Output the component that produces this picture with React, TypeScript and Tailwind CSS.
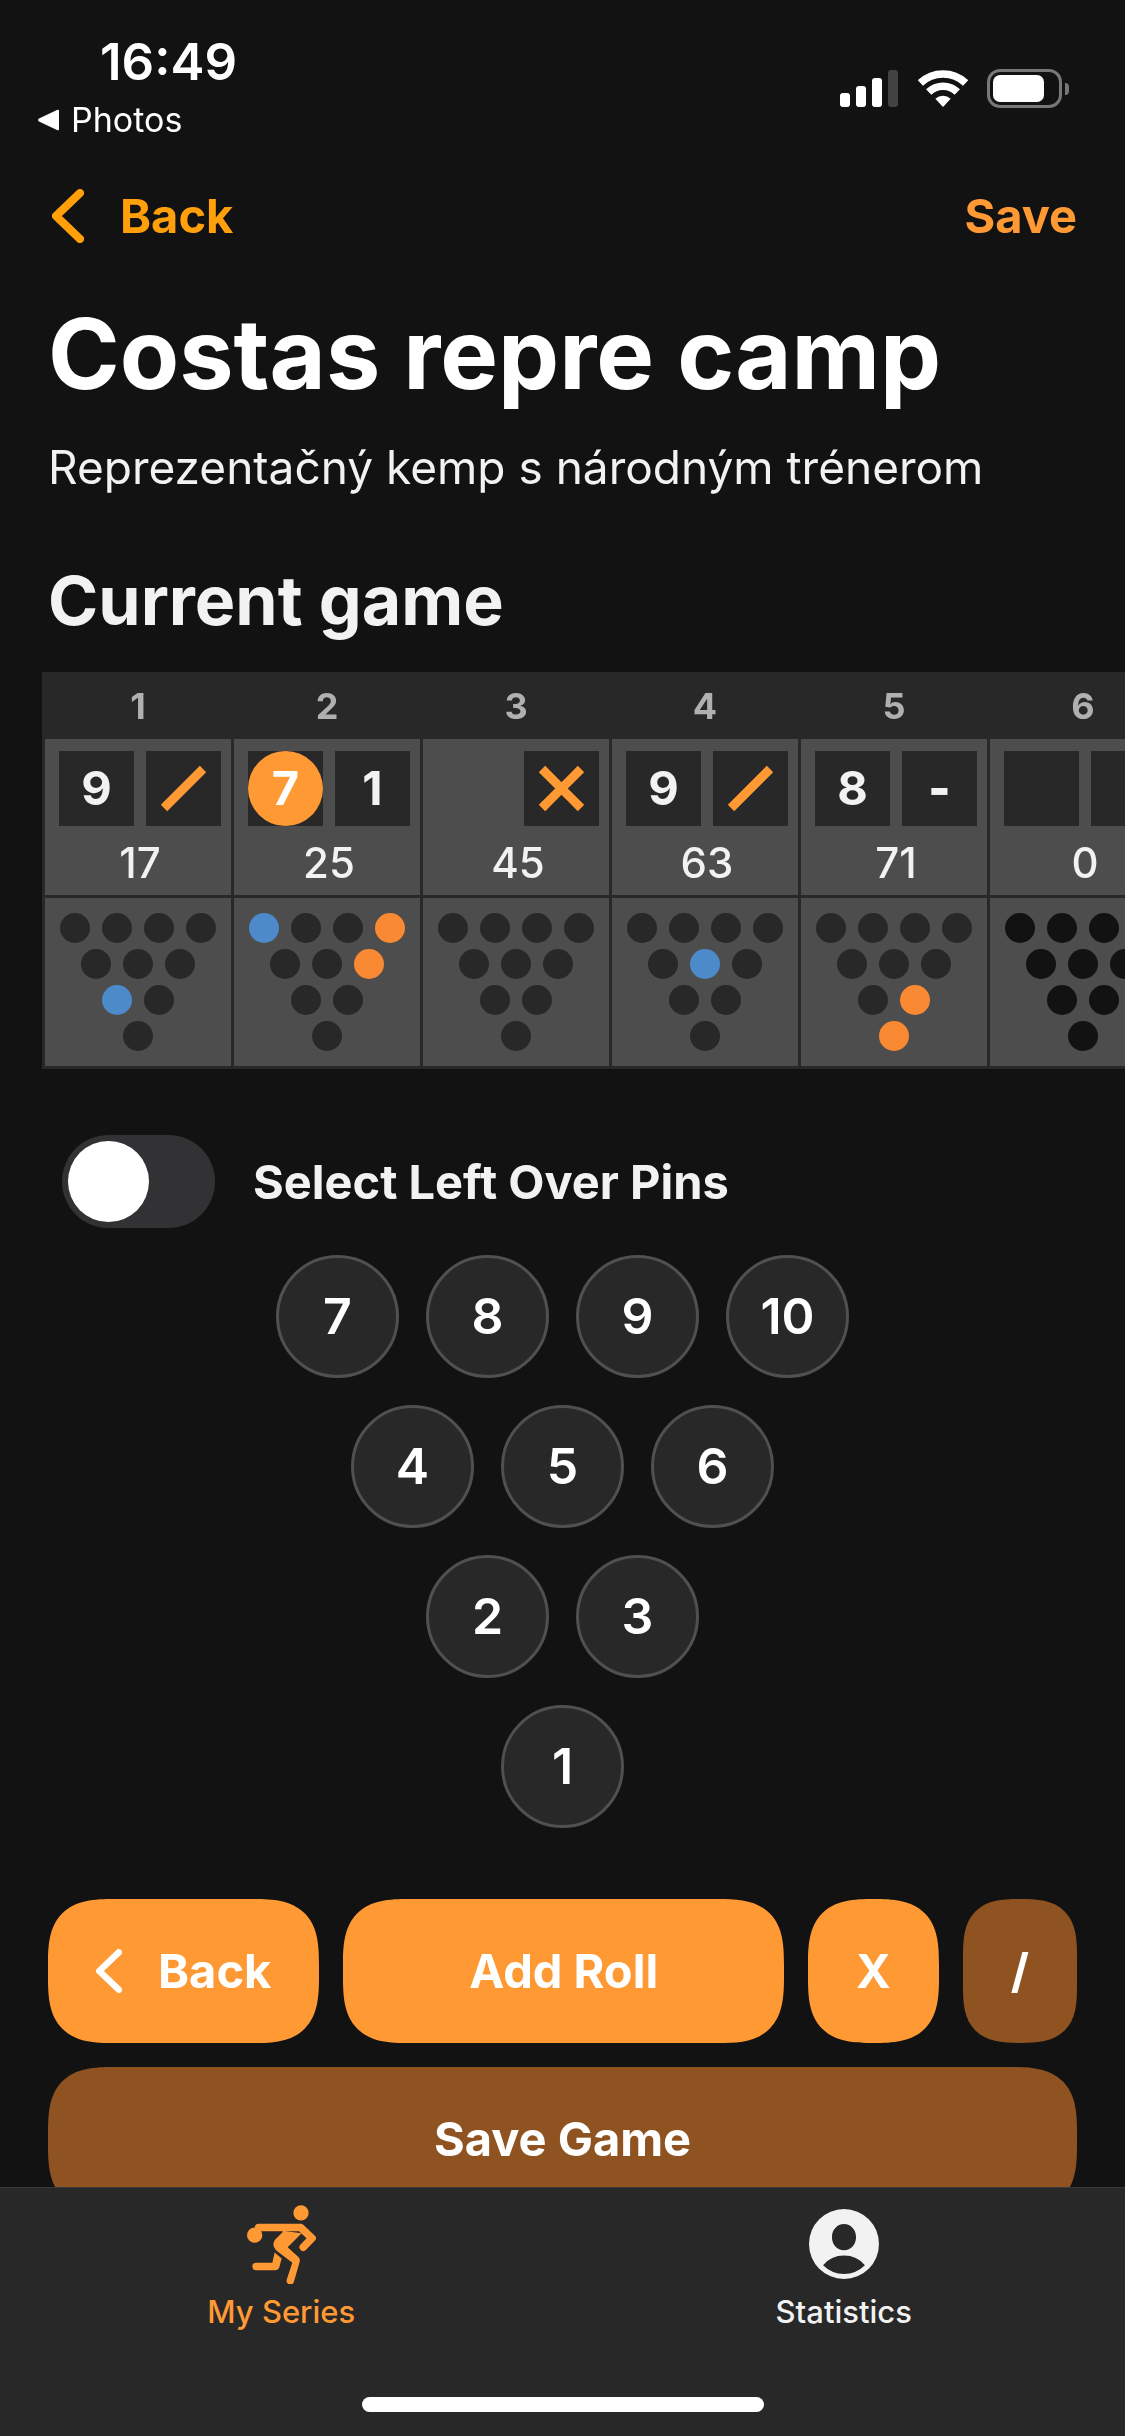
import { useState } from "react";

type Mark = string | null;

interface Frame {
  number: number;
  rolls: [Mark, Mark];
  selected?: number;
  score: number;
  blue: number[];
  orange: number[];
  played: boolean;
}

const PIN_ROWS = [[7, 8, 9, 10], [4, 5, 6], [2, 3], [1]];

const FRAMES: Frame[] = [
  { number: 1, rolls: ["9", "/"], score: 17, blue: [2], orange: [], played: true },
  { number: 2, rolls: ["7", "1"], selected: 0, score: 25, blue: [7], orange: [10, 6], played: true },
  { number: 3, rolls: [null, "X"], score: 45, blue: [], orange: [], played: true },
  { number: 4, rolls: ["9", "/"], score: 63, blue: [5], orange: [], played: true },
  { number: 5, rolls: ["8", "-"], score: 71, blue: [], orange: [3, 1], played: true },
  { number: 6, rolls: ["", ""], score: 0, blue: [], orange: [], played: false },
];

function Chevron({ className }: { className: string }) {
  return (
    <svg viewBox="0 0 32 54" className={className} fill="none" stroke="currentColor" strokeWidth="8" strokeLinecap="round" strokeLinejoin="round" aria-hidden="true">
      <path d="M28 4L4 27l24 23" />
    </svg>
  );
}

function StatusBar() {
  return (
    <div className="flex items-start justify-between pt-8 pr-[56px] pl-[37px] text-white">
      <div>
        <div className="pl-[63px] text-[51px] leading-[60px] font-semibold">16:49</div>
        <a href="#photos" className="mt-2 flex items-center gap-3 text-[34px] leading-[40px]">
          <svg viewBox="0 0 22 22" className="size-[22px]" fill="currentColor" aria-hidden="true">
            <path d="M20 1Q22 0 22 2V20Q22 22 20 21L2 12.500Q0 11 2 9.500Z" />
          </svg>
          Photos
        </a>
      </div>
      <div className="flex items-center pt-[37px]">
        <div className="flex items-end gap-[6px]">
          <span className="h-[14px] w-[10px] rounded-[3px] bg-white" />
          <span className="h-[21px] w-[10px] rounded-[3px] bg-white" />
          <span className="h-[29px] w-[10px] rounded-[3px] bg-white" />
          <span className="h-[37px] w-[10px] rounded-[3px] bg-[#424242]" />
        </div>
        <svg viewBox="0 0 150 111" className="ml-5 h-[37px] w-[50px]" fill="none" stroke="currentColor" strokeWidth="23" aria-hidden="true">
          <path d="M7 39A99 99 0 0 1 143 39" />
          <path d="M32 66A62 62 0 0 1 118 66" />
          <path d="M75 111L52 86A35 35 0 0 1 98 86Z" fill="currentColor" stroke="none" />
        </svg>
        <div className="ml-[19px] h-[39px] w-[75px] rounded-[13px] border-3 border-[#777] p-[3px]">
          <div className="h-full w-[51px] rounded-[7px] bg-white" />
        </div>
        <span className="ml-[3px] h-3 w-1 rounded-r-full bg-[#777]" />
      </div>
    </div>
  );
}

function RollMark({ mark }: { mark: string }) {
  if (mark === "-") return <span className="font-black">-</span>;
  if (mark !== "/" && mark !== "X") return <>{mark}</>;
  return (
    <svg viewBox="0 0 75 75" className="size-full" stroke="#ff9933" strokeWidth="9" role="img" aria-label={mark === "X" ? "Strike" : "Spare"}>
      <path d="M18 57L57 18" />
      {mark === "X" && <path d="M18 18L57 57" />}
    </svg>
  );
}

function RollBox({ mark, selected }: { mark: Mark; selected: boolean }) {
  if (mark === null) return <span className="size-[75px]" />;
  return (
    <span className="size-[75px] bg-[#282828] text-[47px] font-bold">
      <span className={selected ? "flex size-full items-center justify-center rounded-full bg-[#ff9933] text-white" : "flex size-full items-center justify-center"}>
        <RollMark mark={mark} />
      </span>
    </span>
  );
}

function pinColor(frame: Frame, pin: number) {
  if (frame.blue.includes(pin)) return "bg-[#4c8aca]";
  if (frame.orange.includes(pin)) return "bg-[#f98932]";
  return frame.played ? "bg-[#282828]" : "bg-[#121212]";
}

function ScoreSheet() {
  return (
    <div className="mt-[30px] ml-[42px] overflow-x-auto [scrollbar-width:none]">
      <table className="w-max table-fixed border-separate border-spacing-[3px] bg-[#282828] text-[#f2f2f2]">
        <thead>
          <tr>
            {FRAMES.map((f) => (
              <th key={f.number} scope="col" className="h-[61px] w-[186px] p-0 text-[36px] leading-[48px] font-bold text-[#b0b0b0]">
                {f.number}
              </th>
            ))}
          </tr>
        </thead>
        <tbody>
          <tr>
            {FRAMES.map((f) => (
              <td key={f.number} className="h-[156px] bg-[#4d4d4d] pt-3 pr-[10px] pb-0 pl-[14px] align-top">
                <div className="flex gap-3">
                  <RollBox mark={f.rolls[0]} selected={f.selected === 0} />
                  <RollBox mark={f.rolls[1]} selected={f.selected === 1} />
                </div>
                <div className="mt-3 text-center text-[42px] leading-[50px] font-medium">{f.score}</div>
              </td>
            ))}
          </tr>
          <tr>
            {FRAMES.map((f) => (
              <td key={f.number} className="bg-[#4d4d4d] p-[15px]">
                <div className="flex flex-col items-center gap-[6px]">
                  {PIN_ROWS.map((row) => (
                    <div key={row[0]} className="flex gap-3">
                      {row.map((pin) => (
                        <span key={pin} className={`size-[30px] rounded-full ${pinColor(f, pin)}`} />
                      ))}
                    </div>
                  ))}
                </div>
              </td>
            ))}
          </tr>
        </tbody>
      </table>
    </div>
  );
}

function PinPad() {
  return (
    <div className="mt-[27px] flex flex-col items-center gap-[27px]">
      {PIN_ROWS.map((row) => (
        <div key={row[0]} className="flex gap-[27px]">
          {row.map((pin) => (
            <button key={pin} type="button" className="size-[123px] rounded-full border-3 border-[#505050] bg-[#282828] text-[50px] font-semibold text-white">
              {pin}
            </button>
          ))}
        </div>
      ))}
    </div>
  );
}

const ACTION =
  "flex h-36 items-center justify-center rounded-[66px] px-12 text-[47px] font-bold text-white [corner-shape:superellipse(1.5)]";

function Actions() {
  return (
    <div className="mt-[71px] flex flex-col gap-6 px-12">
      <div className="flex gap-6">
        <button type="button" className={`${ACTION} gap-9 bg-[#ff9933]`}>
          <Chevron className="h-11 w-[26px]" />
          Back
        </button>
        <button type="button" className={`${ACTION} flex-1 bg-[#ff9933]`}>Add Roll</button>
        <button type="button" className={`${ACTION} bg-[#ff9933]`}>X</button>
        <button type="button" disabled className={`${ACTION} bg-[#8f5321]`}>/</button>
      </div>
      <button type="button" disabled className={`${ACTION} bg-[#8f5321]`}>Save Game</button>
    </div>
  );
}

function BowlerIcon() {
  return (
    <svg viewBox="0 0 207 236" className="h-[79px] w-[69px]" fill="currentColor" aria-hidden="true">
      <circle cx="162" cy="23" r="23" />
      <circle cx="23" cy="90" r="23" />
      <path d="M35 67H161L195 99L169 126" fill="none" stroke="currentColor" strokeWidth="23" strokeLinecap="round" strokeLinejoin="round" />
      <path d="M106 77L164 84L122 126L155 156Q160 162 158 170L141 229A11 11 0 0 1 119 224L136 173L87 135Q73 120 84 104L108 80Z" />
      <path d="M83 142L104 160L97 186Q94 195 84 195H27A11 11 0 0 1 27 173H76Z" />
    </svg>
  );
}

function PersonIcon() {
  return (
    <svg viewBox="0 0 209 209" className="size-[70px]" fill="currentColor" fillRule="evenodd" aria-hidden="true">
      <path d="M104.500 0a104.500 104.500 0 0 1 0 209a104.500 104.500 0 0 1 0-209ZM104.500 45c-21 0-36 18-36 39s15 39 36 39s36-18 36-39s-15-39-36-39ZM42 168Q68 194 104.500 194T167 168Q143 139 104.500 139T42 168Z" />
    </svg>
  );
}

function TabBar() {
  return (
    <nav className="shrink-0 border-t border-[#3a3a3a] bg-[#282828] pt-4">
      <div className="grid grid-cols-2 text-[31px] leading-[36px] font-medium">
        <a href="#series" aria-current="page" className="flex flex-col items-center gap-[10px] text-[#ff9933]">
          <span className="flex h-20 items-center"><BowlerIcon /></span>
          My Series
        </a>
        <a href="#statistics" className="flex flex-col items-center gap-[10px] text-[#f2f2f2]">
          <span className="flex h-20 items-center"><PersonIcon /></span>
          Statistics
        </a>
      </div>
      <div className="mx-auto mt-[67px] mb-6 h-[15px] w-[402px] rounded-full bg-white" />
    </nav>
  );
}

export default function App() {
  const [leftOver, setLeftOver] = useState(false);
  return (
    <div className="flex h-screen flex-col bg-[#121212] font-['Inter',sans-serif]">
      <main className="min-h-0 flex-1 overflow-y-auto [scrollbar-width:none]">
        <StatusBar />
        <header className="mt-[46px] flex items-center justify-between pr-12 pl-[52px] text-[47px] leading-[60px] font-bold">
          <button type="button" className="flex items-center gap-9 text-[#ff9f0a]">
            <Chevron className="h-[54px] w-8" />
            Back
          </button>
          <button type="button" className="text-[#ff9933]">Save</button>
        </header>
        <h1 className="mt-12 px-12 text-[97px] leading-[120px] font-bold text-white">Costas repre camp</h1>
        <p className="mt-[23px] px-12 text-[46px] leading-[60px] text-[#f2f2f2]">Reprezentačný kemp s národným trénerom</p>
        <h2 className="mt-[61px] px-12 text-[68px] leading-[84px] font-bold text-[#f2f2f2]">Current game</h2>
        <ScoreSheet />
        <label className="mt-[66px] flex items-center gap-[38px] pl-[62px] text-[47px] leading-[60px] font-bold text-[#f2f2f2]">
          <input
            type="checkbox"
            role="switch"
            checked={leftOver}
            onChange={(e) => setLeftOver(e.target.checked)}
            className="h-[93px] w-[153px] appearance-none rounded-full bg-[#323234] p-[6px] before:block before:size-[81px] before:rounded-full before:bg-white checked:bg-[#ff9933] checked:before:ml-[60px]"
          />
          Select Left Over Pins
        </label>
        <PinPad />
        <Actions />
      </main>
      <TabBar />
    </div>
  );
}
